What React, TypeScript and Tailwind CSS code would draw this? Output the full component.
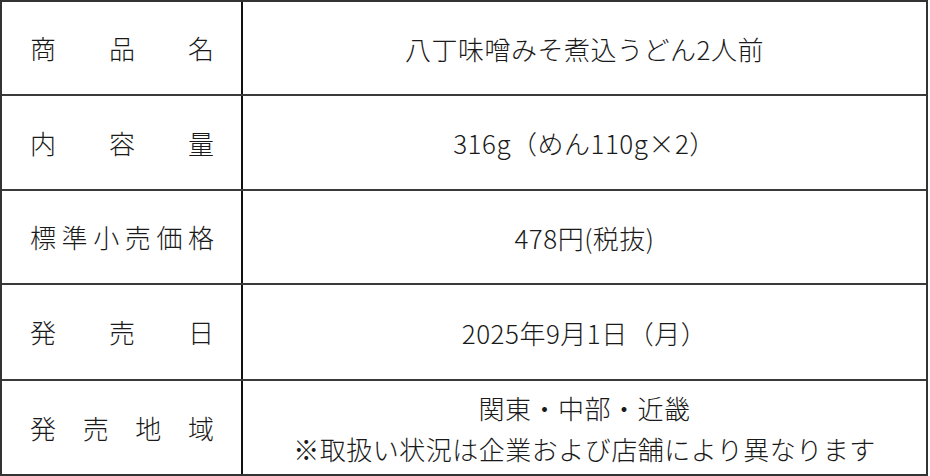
import React from "react";

const font = {
  fontFamily: '"Noto Sans CJK JP", "Noto Sans", sans-serif',
};

function Label({ chars }: { chars: string[] }) {
  return (
    <div className="w-[241px] shrink-0 h-full border-r-2 border-[#111] flex items-center justify-between pl-[28px] pr-[27px] text-[26px] leading-none font-light text-[#1a1a1a]">
      {chars.map((c, i) => (
        <span key={i}>{c}</span>
      ))}
    </div>
  );
}

function Row({
  h,
  last,
  chars,
  children,
}: {
  h: string;
  last?: boolean;
  chars: string[];
  children: React.ReactNode;
}) {
  return (
    <div
      className={`${h} flex shrink-0 ${last ? "" : "border-b-2 border-[#3a3a3a]"}`}
    >
      <Label chars={chars} />
      <div className="flex-1 h-full flex flex-col items-center justify-center text-[26px] leading-[41px] tracking-[0.5px] font-light text-[#1a1a1a]">
        {children}
      </div>
    </div>
  );
}

export default function App() {
  return (
    <div className="w-[930px] h-[476px] bg-white" style={font}>
      <div className="w-[928px] h-[476px] border-2 border-[#333] flex flex-col">
        <Row h="h-[94px]" chars={["商", "品", "名"]}>
          <div>八丁味噌みそ煮込うどん2人前</div>
        </Row>
        <Row h="h-[95px]" chars={["内", "容", "量"]}>
          <div>316g（めん110g×2）</div>
        </Row>
        <Row h="h-[94px]" chars={["標", "準", "小", "売", "価", "格"]}>
          <div>478円(税抜)</div>
        </Row>
        <Row h="h-[96px]" chars={["発", "売", "日"]}>
          <div>2025年9月1日（月）</div>
        </Row>
        <Row h="h-[93px]" last chars={["発", "売", "地", "域"]}>
          <div>関東・中部・近畿</div>
          <div>※取扱い状況は企業および店舗により異なります</div>
        </Row>
      </div>
    </div>
  );
}
